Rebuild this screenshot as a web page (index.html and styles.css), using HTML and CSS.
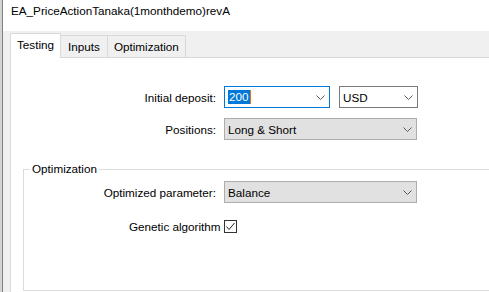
FILE: index.html
```html
<!DOCTYPE html>
<html>
<head>
<meta charset="utf-8">
<link rel="stylesheet" href="styles.css">
</head>
<body>
<div class="window">
  <div class="edge"></div>
  <div class="main">
    <div class="title">EA_PriceActionTanaka(1monthdemo)revA</div>
    <div class="dlg">
      <div class="tabs">
        <div class="tab active">Testing</div>
        <div class="tab inputs">Inputs</div>
        <div class="tab">Optimization</div>
      </div>
      <div class="panel">
        <div class="row">
          <div class="label">Initial deposit:</div>
          <div class="combo focus w-deposit">
            <span class="text"><span class="sel">200</span><span class="caret"></span></span>
            <svg class="chev" width="9" height="5" viewBox="0 0 9 5"><polyline points="0.5,0.5 4.5,4.5 8.5,0.5" fill="none" stroke="#5a5a5a" stroke-width="1"/></svg>
          </div>
          <div class="combo plain w-currency">
            <span class="text">USD</span>
            <svg class="chev" width="9" height="5" viewBox="0 0 9 5"><polyline points="0.5,0.5 4.5,4.5 8.5,0.5" fill="none" stroke="#5a5a5a" stroke-width="1"/></svg>
          </div>
        </div>
        <div class="row">
          <div class="label">Positions:</div>
          <div class="combo ro w-wide">
            <span class="text">Long &amp; Short</span>
            <svg class="chev" width="9" height="5" viewBox="0 0 9 5"><polyline points="0.5,0.5 4.5,4.5 8.5,0.5" fill="none" stroke="#5a5a5a" stroke-width="1"/></svg>
          </div>
        </div>
        <fieldset class="group">
          <legend>Optimization</legend>
          <div class="row">
            <div class="label inner">Optimized parameter:</div>
            <div class="combo ro w-wide">
              <span class="text">Balance</span>
              <svg class="chev" width="9" height="5" viewBox="0 0 9 5"><polyline points="0.5,0.5 4.5,4.5 8.5,0.5" fill="none" stroke="#5a5a5a" stroke-width="1"/></svg>
            </div>
          </div>
          <div class="check-row">
            <span>Genetic algorithm</span>
            <span class="checkbox"><svg width="11" height="11" viewBox="0 0 11 11"><polyline points="1.5,5.5 4,8.5 9.5,2" fill="none" stroke="#222" stroke-width="1"/></svg></span>
          </div>
        </fieldset>
      </div>
    </div>
  </div>
</div>
</body>
</html>
```
FILE: styles.css
```css
html, body {
  margin: 0;
  padding: 0;
}
body {
  width: 489px;
  height: 292px;
  overflow: hidden;
  background: #fff;
  color: #000;
  font-family: "Liberation Sans", Arial, sans-serif;
  font-size: 11.7px;
}
.window {
  display: flex;
  height: 292px;
}
.edge {
  width: 2px;
  background: #d4d4d4;
  border-right: 1px solid #7f7f7f;
}
.main {
  flex: 1;
  display: flex;
  flex-direction: column;
  min-width: 0;
}
.title {
  height: 31px;
  line-height: 22px;
  padding-left: 8px;
  background: #fff;
}
.dlg {
  flex: 1;
  display: flex;
  flex-direction: column;
  background: #f0f0f0;
  padding: 2px 0 0 7px;
  min-height: 0;
}
.tabs {
  display: flex;
  align-items: flex-end;
  height: 25px;
  box-sizing: border-box;
  border-bottom: 1px solid #d9d9d9;
}
.tab {
  height: 22px;
  box-sizing: border-box;
  line-height: 21px;
  padding: 0 6px;
  border-top: 1px solid #d9d9d9;
  border-right: 1px solid #d9d9d9;
  background: #f0f0f0;
}
.tab.inputs {
  padding: 0 7px;
}
.tab.active {
  height: 25px;
  margin-bottom: -1px;
  line-height: 22px;
  padding: 0 6px 0 6px;
  border-left: 1px solid #d9d9d9;
  background: #fff;
}
.panel {
  flex: 1;
  background: #fff;
  border-left: 1px solid #d9d9d9;
  padding-top: 28px;
  overflow: hidden;
  min-height: 0;
}
.row {
  display: flex;
  align-items: center;
  gap: 8px;
  margin-bottom: 10px;
}
.label {
  width: 205px;
  text-align: right;
}
.label.inner {
  width: 192px;
}
.combo {
  height: 22px;
  box-sizing: border-box;
  display: flex;
  align-items: center;
  padding: 0 4px 0 3px;
  border: 1px solid #adadad;
}
.combo .text {
  flex: 1;
  display: flex;
  align-items: center;
}
.combo.focus {
  border-color: #0078d7;
  background: #fff;
}
.combo.plain {
  border-color: #7a7a7a;
  background: #fff;
}
.combo.ro {
  background: #e1e1e1;
}
.w-deposit { width: 106px; }
.w-currency { width: 79px; margin-left: 1px; }
.w-wide { width: 193px; }
.sel {
  background: #0078d7;
  color: #fff;
  line-height: 14px;
  padding: 0 1px;
}
.caret {
  width: 1px;
  height: 14px;
  background: #e8741e;
}
.group {
  margin: 22px -30px 0 12px;
  padding: 0;
  height: 127px;
  border: 1px solid #dcdcdc;
}
.group legend {
  margin-left: 6px;
  padding: 0 2px;
  line-height: 14px;
}
.group .row {
  margin-top: 5px;
  margin-bottom: 0;
}
.check-row {
  display: flex;
  align-items: center;
  gap: 3px;
  margin-top: 17px;
  padding-left: 105px;
  height: 13px;
}
.checkbox {
  width: 13px;
  height: 13px;
  box-sizing: border-box;
  border: 1px solid #333;
  background: #fff;
  display: flex;
  align-items: center;
  justify-content: center;
}
```
